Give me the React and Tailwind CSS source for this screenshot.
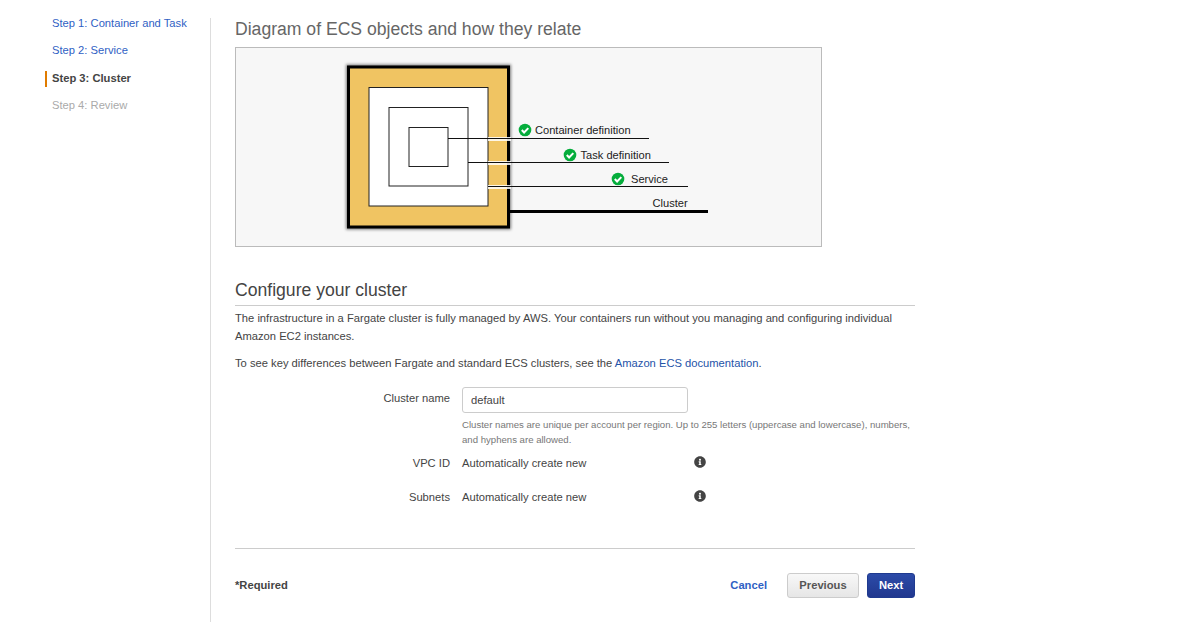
import React from 'react';
import { FaInfoCircle } from 'react-icons/fa';

const font = "font-['Liberation_Sans',Arial,sans-serif]";

function Check({ x, y }) {
  return (
    <g>
      <circle cx={x} cy={y} r="6.3" fill="#05ad3c" />
      <path d={`M${x - 3.2} ${y} l2.3 2.5 l4.2 -4.4`} fill="none" stroke="#fff" strokeWidth="2" />
    </g>
  );
}

function Diagram() {
  return (
    <svg width="584" height="198" viewBox="236 48 584 198" className="block">
      <defs>
        <filter id="soft" x="-5%" y="-5%" width="110%" height="110%">
          <feGaussianBlur stdDeviation="1.5" />
        </filter>
      </defs>
      <rect x="346" y="64.5" width="165" height="165" fill="#000" opacity="0.5" filter="url(#soft)" />
      <rect x="348.5" y="67" width="160" height="160" fill="#f0c462" stroke="#000" strokeWidth="3" />
      <rect x="369" y="87.5" width="119" height="118.5" fill="#fff" stroke="#222" />
      <rect x="389" y="107.5" width="79" height="78.5" fill="#fff" stroke="#222" />
      <rect x="409" y="127.5" width="39" height="39" fill="#fff" stroke="#222" />

      <rect x="488" y="137" width="23" height="4" fill="#fff" opacity="0.85" />
      <rect x="488" y="161" width="23" height="4" fill="#fff" opacity="0.85" />
      <rect x="488" y="185" width="23" height="4" fill="#fff" opacity="0.85" />
      <path d="M448 138.5H649M468 162.5H669M488 186.5H688" stroke="#111" fill="none" />
      <path d="M510 211.5H708" stroke="#000" strokeWidth="3" fill="none" />

      <Check x={525} y={130} />
      <Check x={570} y={155} />
      <Check x={618} y={179} />
      <g fontFamily="'Liberation Sans', Arial, sans-serif" fontSize="11.1" fill="#222">
        <text x="535" y="134">Container definition</text>
        <text x="580.5" y="159">Task definition</text>
        <text x="631" y="183">Service</text>
        <text x="652.5" y="207">Cluster</text>
      </g>
    </svg>
  );
}

function Field({ label, children, info }) {
  return (
    <div className="flex h-[34px]">
      <div className="w-[215px] text-right text-[#444] leading-[18px]">{label}</div>
      <div className="ml-3 w-[225px] text-[#444] leading-[18px]">{children}</div>
      {info && <FaInfoCircle className="ml-[7px] mt-[2px] text-[12px] text-[#444]" />}
    </div>
  );
}

export default function App() {
  return (
    <div className={`${font} h-[644px] bg-white text-[11.2px] text-[#444] flex pt-[18px] overflow-hidden`}>
      <nav className="w-[211px] h-[604px] border-r border-[#ddd] shrink-0 pl-[45px]">
        <ul className="-mt-[2px] text-[11.2px] leading-[14px]">
          <li className="h-[27px] pl-[7px] text-[#2f5fc4]">Step 1: Container and Task</li>
          <li className="h-[27px] pl-[7px] text-[#2f5fc4]">Step 2: Service</li>
          <li className="h-[16px] mt-[1px] mb-[11px] pl-[5px] border-l-2 border-[#e07b00] font-bold text-[#444]">Step 3: Cluster</li>
          <li className="pl-[7px] text-[#aaa]">Step 4: Review</li>
        </ul>
      </nav>

      <main className="ml-6 w-[680px]">
        <h1 className="text-[17.6px] leading-[22px] text-[#666]">Diagram of ECS objects and how they relate</h1>
        <div className="mt-[7px] w-[587px] h-[200px] border border-[#bbb] bg-[#f7f7f7]">
          <Diagram />
        </div>

        <h2 className="mt-[32px] text-[17.6px] leading-[22px] text-[#444] pb-[4px] border-b border-[#ccc]">Configure your cluster</h2>
        <p className="mt-[3px] leading-[18px] text-[#444]">
          The infrastructure in a Fargate cluster is fully managed by AWS. Your containers run without you managing and configuring individual
          Amazon EC2 instances.
        </p>
        <p className="mt-[9px] leading-[18px]">
          To see key differences between Fargate and standard ECS clusters, see the <a className="text-[#2453a8]">Amazon ECS documentation</a>.
        </p>

        <div className="mt-[15px] flex">
          <div className="w-[215px] text-right pt-[2px] leading-[18px]">Cluster name</div>
          <div className="ml-3 flex-1">
            <input
              readOnly
              value="default"
              className="block w-[226px] h-[26px] px-2 border border-[#ccc] rounded-[3px] text-[11.2px] text-[#444] bg-white"
            />
            <p className="mt-[4px] text-[9.6px] leading-[15px] text-[#777]">
              Cluster names are unique per account per region. Up to 255 letters (uppercase and lowercase), numbers, and hyphens are allowed.
            </p>
          </div>
        </div>

        <div className="mt-[7px]">
          <Field label="VPC ID" info>Automatically create new</Field>
          <Field label="Subnets" info>Automatically create new</Field>
        </div>

        <div className="mt-[26px] border-t border-[#ccc] pt-6 flex items-center">
          <span className="font-bold">*Required</span>
          <a className="ml-auto font-bold text-[#2f5fc4]">Cancel</a>
          <button className="ml-5 w-[72px] h-[25px] rounded-[3px] border border-[#ccc] bg-gradient-to-b from-[#f8f8f8] to-[#e6e6e6] font-bold text-[#555] text-[11.2px]">Previous</button>
          <button className="ml-2 w-12 h-[25px] rounded-[3px] border border-[#1f3a8f] bg-gradient-to-b from-[#2c4ba8] to-[#21388f] font-bold text-white text-[11.2px]">Next</button>
        </div>
      </main>
    </div>
  );
}
